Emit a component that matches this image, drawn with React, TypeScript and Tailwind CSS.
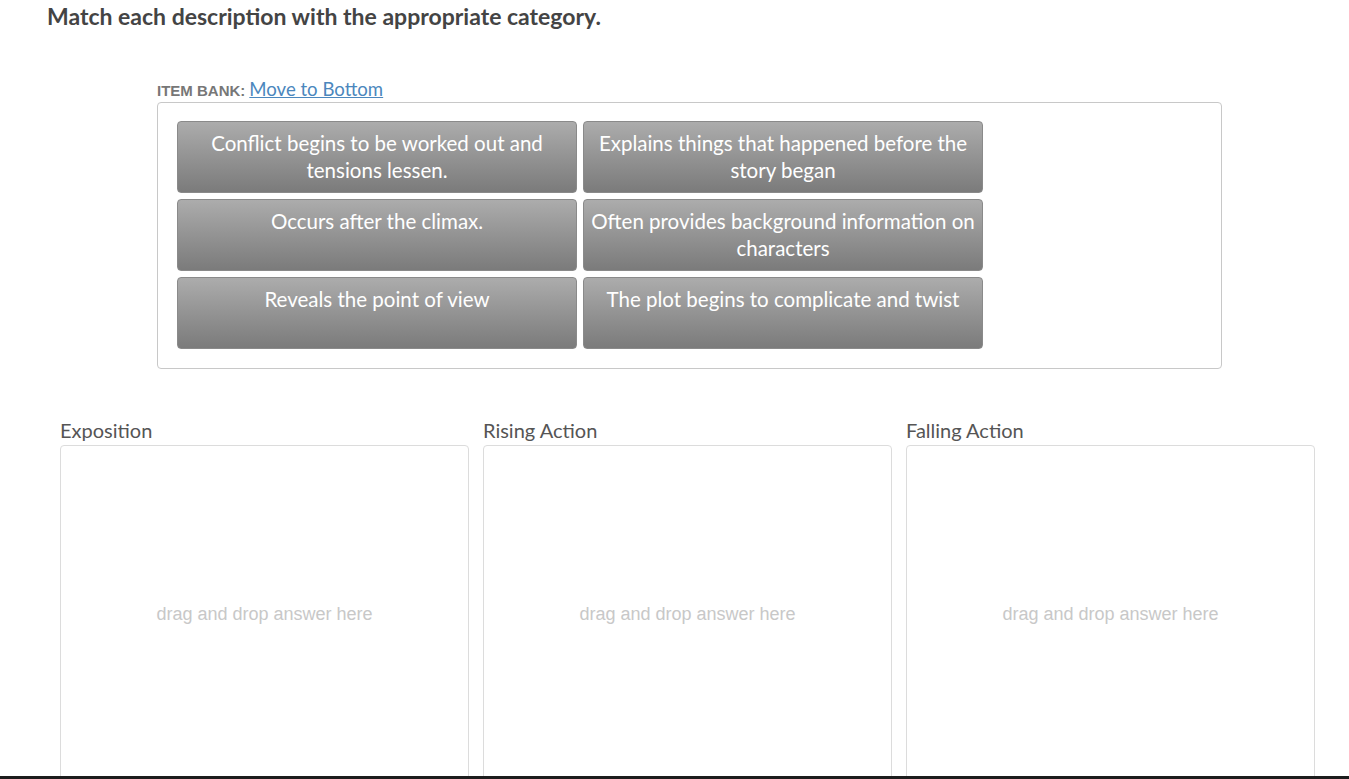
const items = [
  "Conflict begins to be worked out and tensions lessen.",
  "Explains things that happened before the story began",
  "Occurs after the climax.",
  "Often provides background information on characters",
  "Reveals the point of view",
  "The plot begins to complicate and twist",
]

const categories = ["Exposition", "Rising Action", "Falling Action"]

function Tile({ text }: { text: string }) {
  return (
    <div className="h-[72px] w-[400px] rounded-[4px] border border-[#8a8a8a] bg-gradient-to-b from-[#acacac] to-[#7b7b7b] px-[4px] pt-[8px] text-center text-[20.5px] leading-[27px] text-white">
      {text}
    </div>
  )
}

export default function App() {
  return (
    <div className="relative h-[779px] overflow-hidden bg-white font-['Lato','Liberation_Sans',sans-serif]">
      <h1 className="pl-[47px] pt-[2px] text-[23px] font-bold leading-[28px] text-[#444]">
        Match each description with the appropriate category.
      </h1>

      <div className="ml-[157px] mt-[48px] w-[1065px]">
        <div className="flex items-baseline gap-[4px] leading-[22px]">
          <span className="font-['Liberation_Sans',sans-serif] text-[15px] font-bold text-[#777]">
            ITEM BANK:
          </span>
          <a href="#" className="text-[18.6px] text-[#4b87bd] underline">
            Move to Bottom
          </a>
        </div>
        <div className="rounded-[4px] border border-[#c8c8c8] px-[19px] pb-[19px] pt-[18px]">
          <div className="grid w-[806px] grid-cols-2 gap-[6px]">
            {items.map((t) => (
              <Tile key={t} text={t} />
            ))}
          </div>
        </div>
      </div>

      <div className="ml-[60px] mt-[49px] flex gap-[14px]">
        {categories.map((c) => (
          <div key={c} className="w-[409px]">
            <div className="pb-[3px] text-[20px] leading-[24px] text-[#555]">{c}</div>
            <div className="flex h-[340px] items-center justify-center rounded-[4px] border border-[#dcdcdc] pb-[2px]">
              <span className="font-['Liberation_Sans',sans-serif] text-[18px] text-[#c8c8c8]">
                drag and drop answer here
              </span>
            </div>
          </div>
        ))}
      </div>

      <div className="absolute bottom-0 left-0 h-[3px] w-full bg-[#1c1c1c]" />
    </div>
  )
}
